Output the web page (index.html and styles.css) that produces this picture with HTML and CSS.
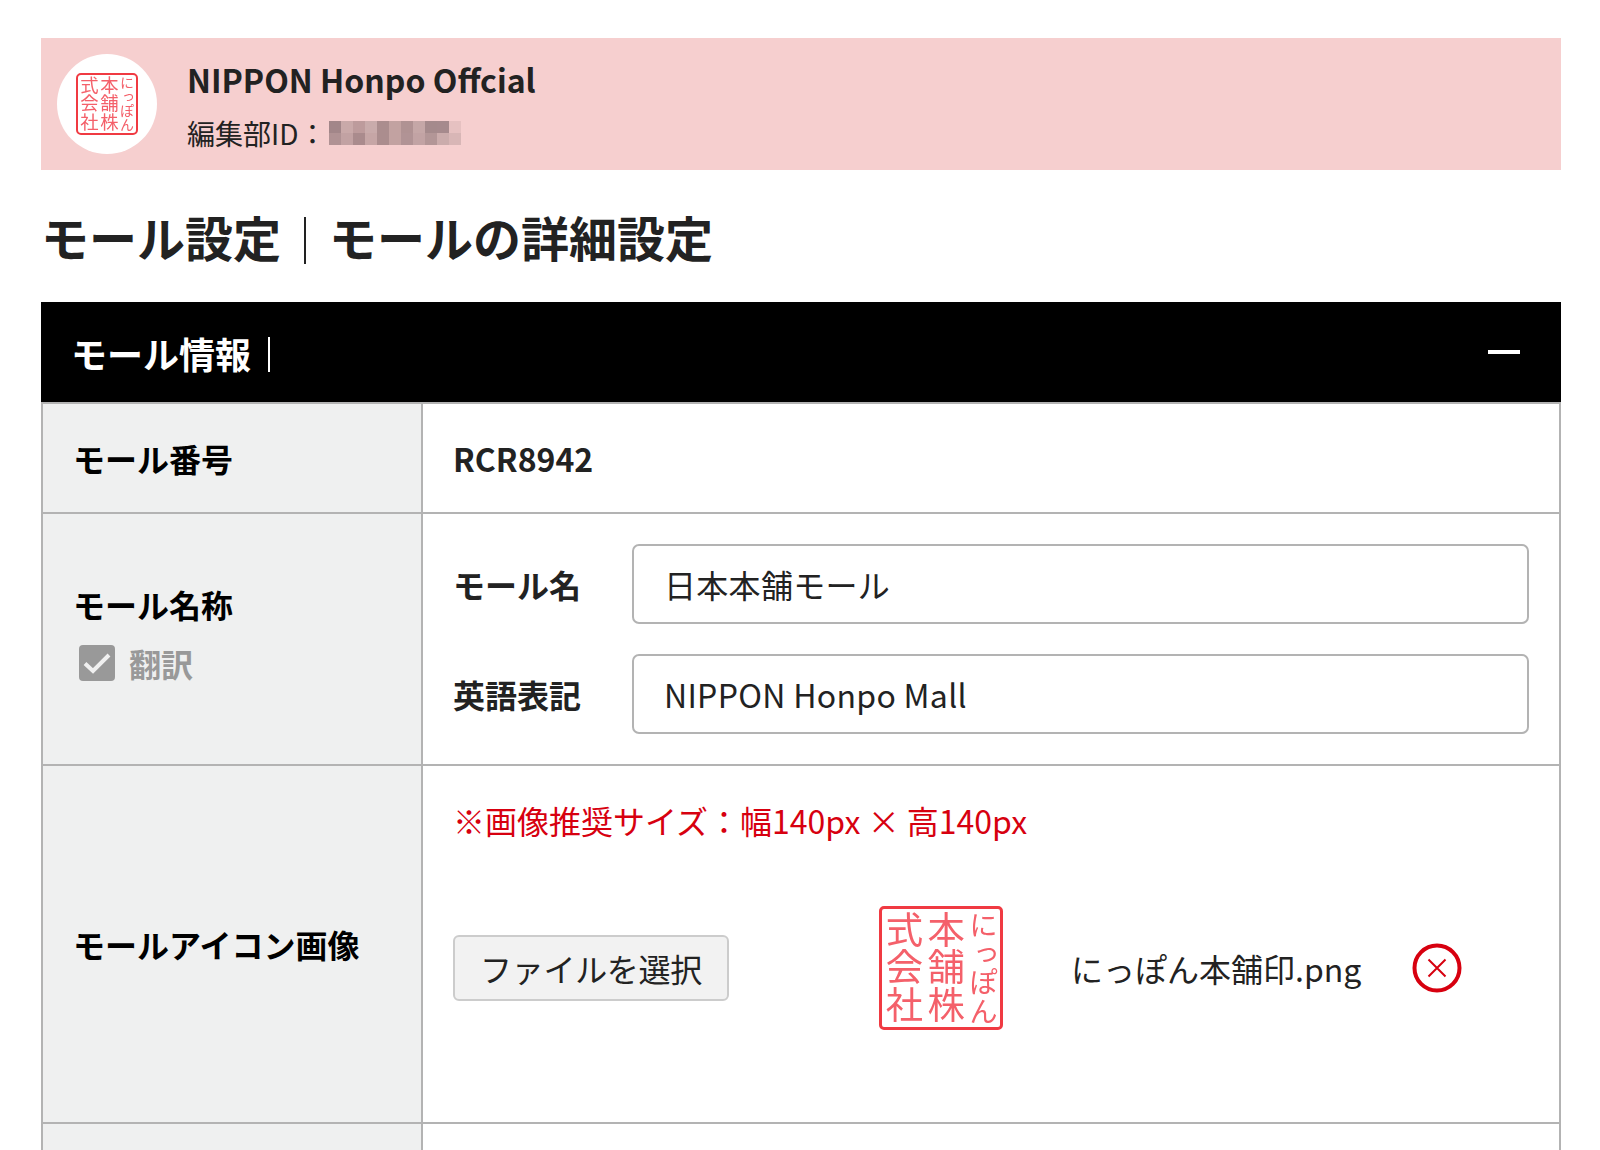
FILE: index.html
```html
<!DOCTYPE html>
<html lang="ja">
<head>
<meta charset="utf-8">
<title>モール設定</title>
<link rel="stylesheet" href="styles.css">
</head>
<body>
<header class="account">
  <div class="avatar">
    <div class="seal seal-small"><span class="seal-kana">にっぽん</span><span class="seal-kanji">本舗株</span><span class="seal-kanji">式会社</span></div>
  </div>
  <div class="account-text">
    <p class="account-name">NIPPON Honpo Offcial</p>
    <p class="account-id">編集部ID：<svg class="mosaic" width="132" height="24" viewBox="0 0 11 2" shape-rendering="crispEdges" aria-hidden="true">
      <rect x="0" y="0" width="1" height="1" fill="#a28689"/><rect x="1" y="0" width="1" height="1" fill="#c9a9a9"/><rect x="2" y="0" width="1" height="1" fill="#bd9b9c"/><rect x="3" y="0" width="1" height="1" fill="#c9abab"/><rect x="4" y="0" width="1" height="1" fill="#ab8d8e"/><rect x="5" y="0" width="1" height="1" fill="#c2a2a1"/><rect x="6" y="0" width="1" height="1" fill="#b09293"/><rect x="7" y="0" width="1" height="1" fill="#c5a7a7"/><rect x="8" y="0" width="1" height="1" fill="#a58a8c"/><rect x="9" y="0" width="1" height="1" fill="#a68a8d"/><rect x="10" y="0" width="1" height="1" fill="#e6c1c1"/>
      <rect x="0" y="1" width="1" height="1" fill="#b09294"/><rect x="1" y="1" width="1" height="1" fill="#c2a2a3"/><rect x="2" y="1" width="1" height="1" fill="#aa8b8d"/><rect x="3" y="1" width="1" height="1" fill="#c6a6a6"/><rect x="4" y="1" width="1" height="1" fill="#ab8d8e"/><rect x="5" y="1" width="1" height="1" fill="#c2a2a1"/><rect x="6" y="1" width="1" height="1" fill="#b19395"/><rect x="7" y="1" width="1" height="1" fill="#c2a3a4"/><rect x="8" y="1" width="1" height="1" fill="#b39697"/><rect x="9" y="1" width="1" height="1" fill="#cbacac"/><rect x="10" y="1" width="1" height="1" fill="#d8b6b6"/>
    </svg></p>
  </div>
</header>

<h1 class="page-title"><span>モール設定</span><i class="title-rule"></i><span>モールの詳細設定</span></h1>

<section class="panel">
  <div class="panel-head">
    <h2 class="panel-title">モール情報</h2><i class="panel-rule"></i>
    <i class="collapse"></i>
  </div>
  <div class="rows">
    <div class="row row-number">
      <div class="label">モール番号</div>
      <div class="value value-code">RCR8942</div>
    </div>
    <div class="row row-name">
      <div class="label label-stack">
        <div>モール名称</div>
        <label class="translate">
          <svg class="check" width="36" height="36" viewBox="0 0 36 36" aria-hidden="true"><rect width="36" height="36" rx="4" fill="#999"/><path d="M6 18.500 L14 26 L30 10" fill="none" stroke="#f0f0f0" stroke-width="4"/></svg>
          <span>翻訳</span>
        </label>
      </div>
      <div class="value fields">
        <div class="field"><span class="field-label">モール名</span><div class="input">日本本舗モール</div></div>
        <div class="field"><span class="field-label">英語表記</span><div class="input">NIPPON Honpo Mall</div></div>
      </div>
    </div>
    <div class="row row-icon">
      <div class="label">モールアイコン画像</div>
      <div class="value upload">
        <p class="note">※画像推奨サイズ：幅140px × 高140px</p>
        <div class="upload-line">
          <button class="file-button" type="button">ファイルを選択</button>
          <div class="seal seal-large"><span class="seal-kana">にっぽん</span><span class="seal-kanji">本舗株</span><span class="seal-kanji">式会社</span></div>
          <span class="file-name">にっぽん本舗印.png</span>
          <svg class="remove" width="50" height="50" viewBox="0 0 50 50" aria-hidden="true"><circle cx="25" cy="25" r="22.500" fill="#fff" stroke="#d7000f" stroke-width="4"/><path d="M16.500 16.500 L33.500 33.500 M33.500 16.500 L16.500 33.500" stroke="#d7000f" stroke-width="2"/></svg>
        </div>
      </div>
    </div>
    <div class="row row-next">
      <div class="label"></div>
      <div class="value"></div>
    </div>
  </div>
</section>
</body>
</html>
```

FILE: styles.css
```css
* { box-sizing: border-box; }
html, body { height: 1150px; overflow: hidden; }
body {
  margin: 0;
  padding: 38px 39px 0 41px;
  background: #fff;
  color: #222;
  font-family: "Noto Sans CJK JP", "Noto Sans", sans-serif;
}
p, h1, h2 { margin: 0; }

.account {
  display: flex;
  align-items: center;
  gap: 30px;
  height: 132px;
  padding-left: 16px;
  background: #f6cfcf;
}
.avatar {
  display: flex;
  align-items: center;
  justify-content: center;
  width: 100px;
  height: 100px;
  border-radius: 50%;
  background: #fff;
}
.account-text { display: flex; flex-direction: column; gap: 11px; }
.account-name { font-size: 32px; font-weight: 700; line-height: 46px; }
.account-id { display: flex; align-items: center; font-size: 28px; line-height: 40px; }
.mosaic { margin: 0 0 0 3px; }

.seal {
  display: flex;
  flex-direction: row-reverse;
  justify-content: space-between;
  border: 2px solid #f03a42;
  border-radius: 5px;
  color: #f4606a;
  font-weight: 400;
  line-height: 1;
  white-space: nowrap;
  filter: blur(0.4px);
}
.seal span { writing-mode: vertical-rl; }
.seal-kanji { font-size: 1.31em; }
.seal-small { width: 62px; height: 62px; padding: 1px 2px; font-size: 14px; }
.seal-large { width: 124px; height: 124px; padding: 2px 3px; font-size: 28.500px; border-width: 3px; }

.page-title {
  display: flex;
  align-items: center;
  height: 132px;
  font-size: 48px;
  font-weight: 700;
  line-height: 70px;
}
.title-rule { width: 2px; height: 47px; margin: 8px 23px 0 23px; background: #222; }

.panel-head {
  display: flex;
  align-items: center;
  height: 100px;
  padding: 0 41px 0 30px;
  background: #000;
  color: #fff;
}
.panel-title { margin-top: 2px; font-size: 36px; font-weight: 700; line-height: 50px; }
.panel-rule { width: 2px; height: 35px; margin: 4px 0 0 17px; background: #fff; }
.collapse { width: 32px; height: 4px; margin: 0 0 0 auto; background: #fff; }

.rows { border: 2px solid #b3b3b3; border-width: 0 2px; }
.row {
  display: grid;
  grid-template-columns: 380px 1fr;
  border-top: 2px solid #b3b3b3;
}
.row-number { height: 110px; }
.row-name { height: 252px; }
.row-icon { height: 358px; }
.row-next { height: 60px; }

.label {
  display: flex;
  align-items: center;
  padding-left: 30px;
  background: #eff0f0;
  border-right: 2px solid #b3b3b3;
  color: #000;
  font-size: 32px;
  font-weight: 700;
}
.label-stack {
  flex-direction: column;
  align-items: flex-start;
  justify-content: center;
  line-height: 46px;
  padding-bottom: 14px;
}
.translate {
  display: flex;
  align-items: center;
  gap: 14px;
  margin: 16px 0 0 6px;
  color: #999;
  line-height: 40px;
}
.check { display: block; }

.value { padding: 0 30px; }
.value-code { display: flex; align-items: center; font-size: 32px; font-weight: 700; }

.fields { display: flex; flex-direction: column; justify-content: center; gap: 30px; }
.field { display: flex; align-items: center; }
.field-label { width: 179px; font-size: 32px; font-weight: 700; }
.input {
  display: flex;
  align-items: center;
  flex: 1;
  height: 80px;
  padding: 0 30px;
  border: 2px solid #b3b3b3;
  border-radius: 7px;
  background: #fff;
  font-size: 32px;
  letter-spacing: 0.3px;
}

.upload { display: flex; flex-direction: column; }
.note { margin-top: 31px; color: #d7000f; font-size: 32px; line-height: 46px; }
.upload-line { display: flex; align-items: center; margin-top: 55px; height: 140px; }
.file-button {
  width: 276px;
  height: 66px;
  border: 2px solid #ccc;
  border-radius: 6px;
  background: #f2f2f2;
  color: #222;
  font: 400 32px "Noto Sans CJK JP", sans-serif;
  letter-spacing: -0.3px;
}
.seal-large { margin-left: 150px; }
.file-name { margin-left: 68px; font-size: 32px; }
.remove { margin-left: 51px; }
```
